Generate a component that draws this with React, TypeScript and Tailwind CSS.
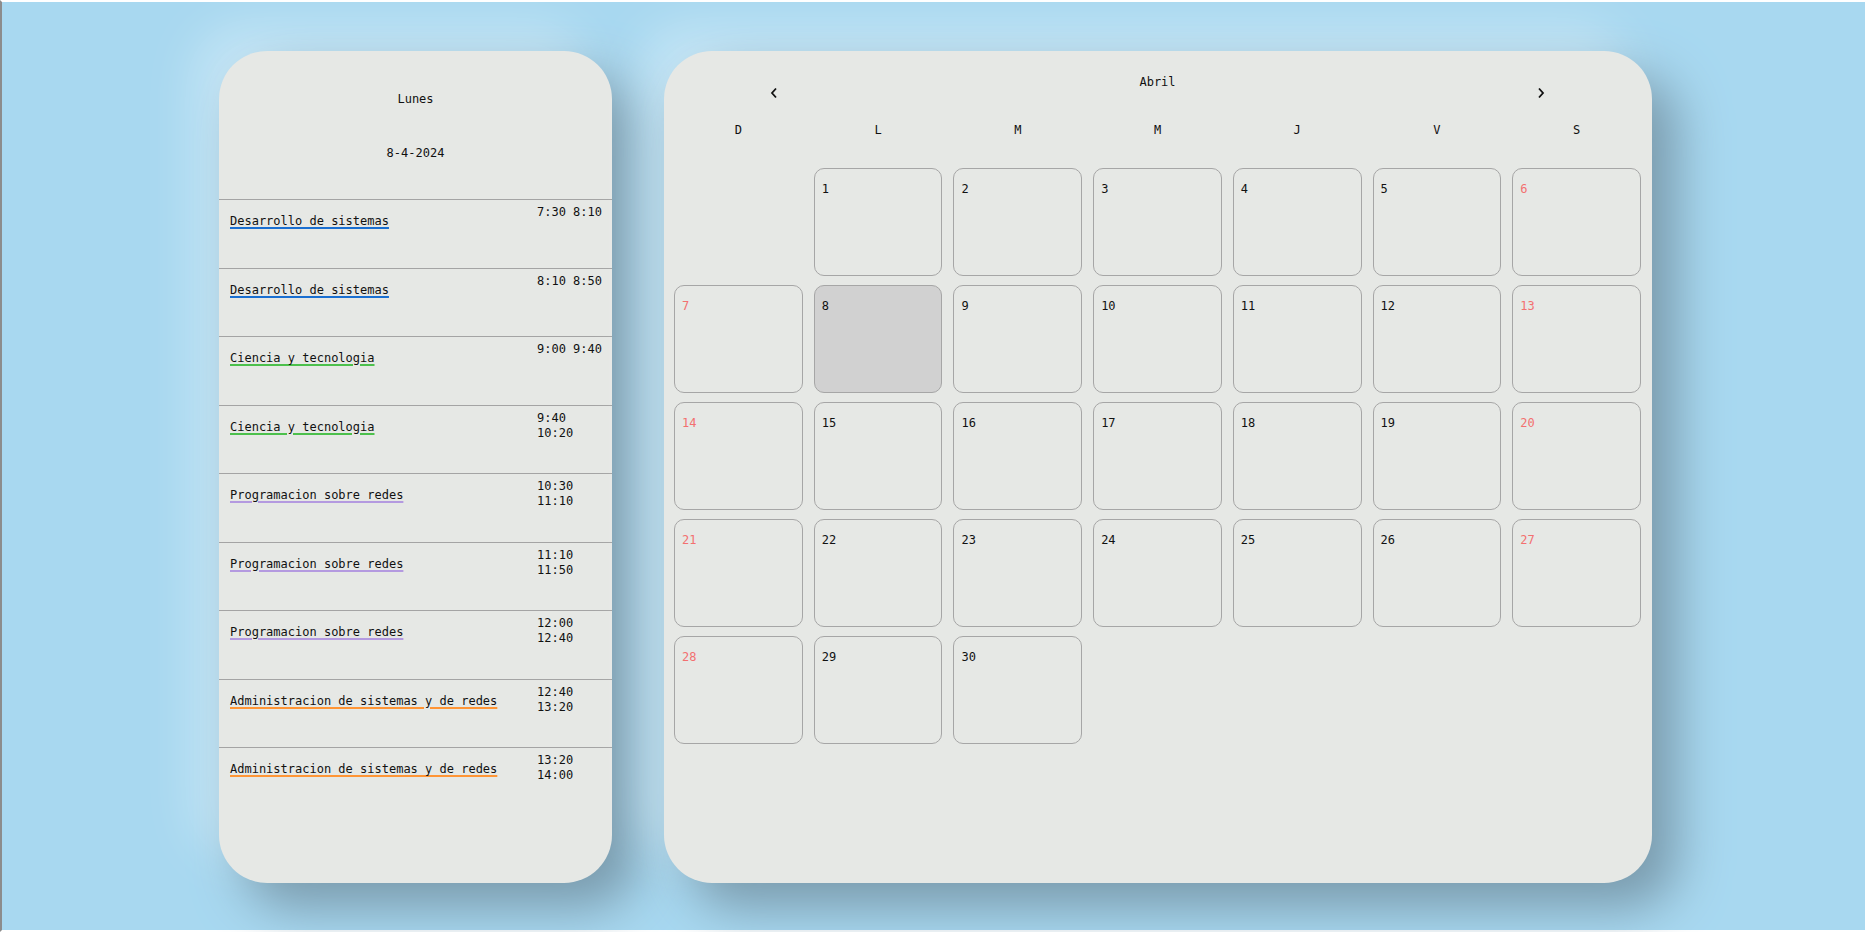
const schedule = [
  { subject: 'Desarrollo de sistemas', time: '7:30 8:10', color: 'decoration-[#1a6fd1]' },
  { subject: 'Desarrollo de sistemas', time: '8:10 8:50', color: 'decoration-[#1a6fd1]' },
  { subject: 'Ciencia y tecnologia', time: '9:00 9:40', color: 'decoration-[#4cc04c]' },
  { subject: 'Ciencia y tecnologia', time: '9:40 10:20', color: 'decoration-[#4cc04c]' },
  { subject: 'Programacion sobre redes', time: '10:30 11:10', color: 'decoration-[#b49ae0]' },
  { subject: 'Programacion sobre redes', time: '11:10 11:50', color: 'decoration-[#b49ae0]' },
  { subject: 'Programacion sobre redes', time: '12:00 12:40', color: 'decoration-[#b49ae0]' },
  { subject: 'Administracion de sistemas y de redes', time: '12:40 13:20', color: 'decoration-[#ff9535]' },
  { subject: 'Administracion de sistemas y de redes', time: '13:20 14:00', color: 'decoration-[#ff9535]' },
];

const weekDays = ['D', 'L', 'M', 'M', 'J', 'V', 'S'];

// April 2024 starts on a Monday
const cells: (number | null)[] = [null, ...Array.from({ length: 30 }, (_, i) => i + 1)];

function Chevron({ dir }: { dir: 'left' | 'right' }) {
  return (
    <svg width="8" height="12" viewBox="0 0 8 12" className="mt-[12px]">
      <path
        d={dir === 'left' ? 'M6 1.5 L2 6 L6 10.5' : 'M2 1.5 L6 6 L2 10.5'}
        fill="none"
        stroke="#111"
        strokeWidth="1.8"
      />
    </svg>
  );
}

function DayPanel() {
  return (
    <div className="flex h-[832px] w-[393px] shrink-0 flex-col overflow-hidden rounded-[48px] bg-[#e6e8e5] shadow-[25px_25px_50px_#7a9bad,-25px_-25px_50px_rgba(255,255,255,0.35)]">
      <div className="flex h-[148px] flex-col items-center pt-[41px] leading-[15px]">
        <p>Lunes</p>
        <p className="mt-[39px]">8-4-2024</p>
      </div>
      {schedule.map((item, i) => (
        <div
          key={i}
          className="flex h-[68.5px] shrink-0 justify-between border-t border-[#a4a4a4] pl-[11px] pr-[9px]"
        >
          <a
            href="#"
            className={`pt-[14px] leading-[15px] text-[#111] underline decoration-[1.5px] underline-offset-2 ${item.color}`}
          >
            {item.subject}
          </a>
          <div className="w-[66px] pt-[5px] leading-[15px]">{item.time}</div>
        </div>
      ))}
    </div>
  );
}

function CalendarPanel() {
  return (
    <div className="flex h-[832px] w-[988px] shrink-0 flex-col rounded-[48px] bg-[#e6e8e5] pl-[10px] pr-[11px] shadow-[25px_25px_50px_#7a9bad,-25px_-25px_50px_rgba(255,255,255,0.35)]">
      <div className="flex h-[72px] items-start justify-between px-[96px] pt-[24px] leading-[15px]">
        <Chevron dir="left" />
        <p>Abril</p>
        <Chevron dir="right" />
      </div>
      <div className="grid grid-cols-7 gap-x-[11px] leading-[15px]">
        {weekDays.map((d, i) => (
          <div key={i} className="text-center">
            {d}
          </div>
        ))}
      </div>
      <div className="mt-[30px] grid grid-cols-7 gap-x-[11px] gap-y-[9px]">
        {cells.map((day, i) => {
          if (day === null) return <div key={i} className="h-[108px]" />;
          const weekend = i % 7 === 0 || i % 7 === 6;
          const today = day === 8;
          return (
            <div
              key={i}
              className={`h-[108px] rounded-[10px] border border-[#a6a6a6] pl-[7px] pt-[13px] leading-[15px] ${
                today ? 'bg-[#d1d1d1]' : ''
              } ${weekend ? 'text-[#f37070]' : 'text-[#111]'}`}
            >
              {day}
            </div>
          );
        })}
      </div>
    </div>
  );
}

export default function App() {
  return (
    <div className="flex h-[932px] w-full items-start justify-center gap-[52px] border-y-2 border-l-2 border-y-white border-l-[#8c8c8c] bg-[#a8d8f0] pl-[4px] pt-[49px] font-['DejaVu_Sans_Mono',monospace] text-[12px] text-[#111]">
      <DayPanel />
      <CalendarPanel />
    </div>
  );
}
